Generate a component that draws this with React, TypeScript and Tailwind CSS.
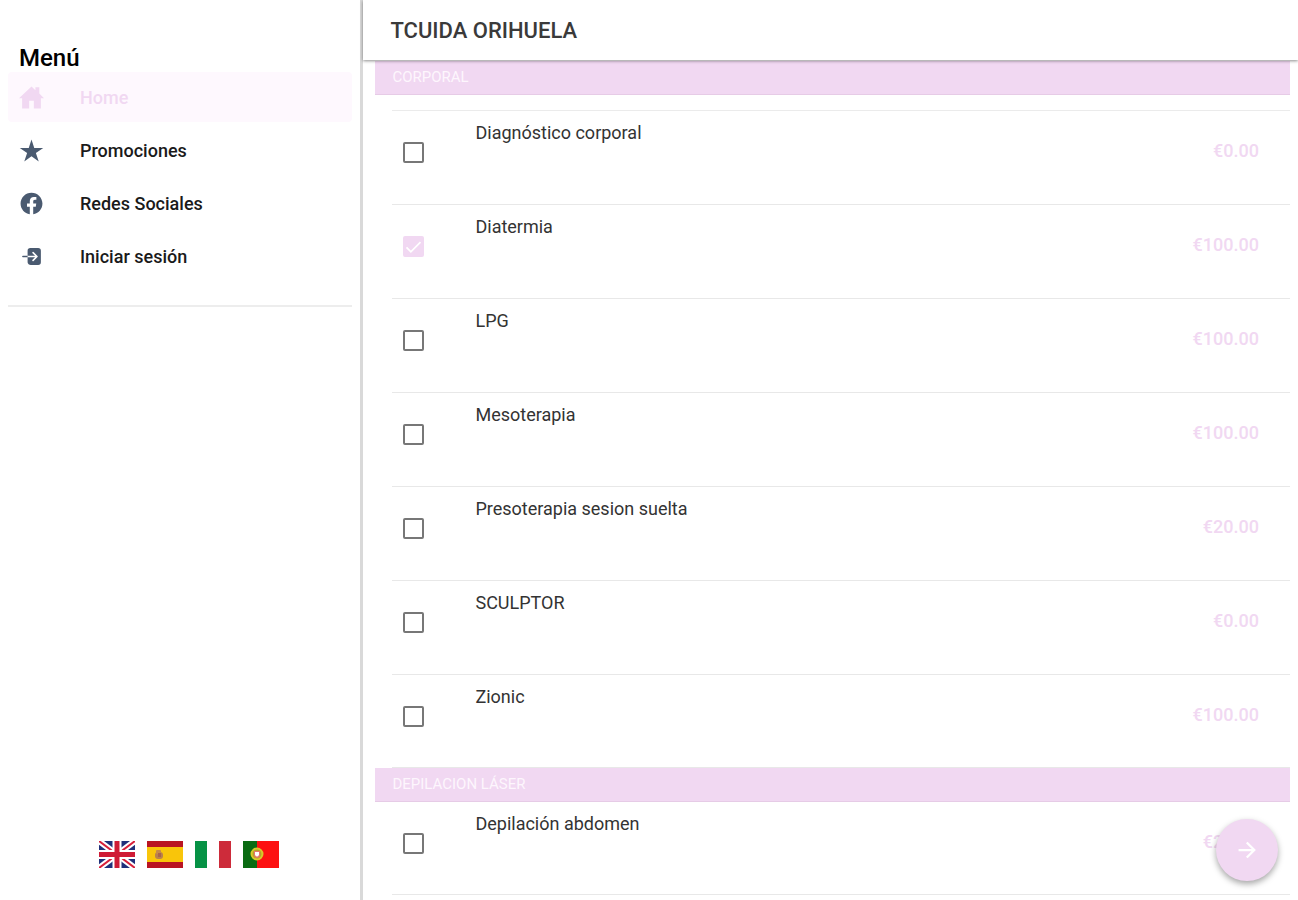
import { useState } from 'react';
import { IoHomeSharp, IoLogIn, IoLogoFacebook, IoStarSharp, IoArrowForwardSharp } from 'react-icons/io5';

const menuItems = [
  { label: 'Home', icon: IoHomeSharp },
  { label: 'Promociones', icon: IoStarSharp },
  { label: 'Redes Sociales', icon: IoLogoFacebook },
  { label: 'Iniciar sesión', icon: IoLogIn },
];

const corporal = [
  { name: 'Diagnóstico corporal', price: '€0.00' },
  { name: 'Diatermia', price: '€100.00' },
  { name: 'LPG', price: '€100.00' },
  { name: 'Mesoterapia', price: '€100.00' },
  { name: 'Presoterapia sesion suelta', price: '€20.00' },
  { name: 'SCULPTOR', price: '€0.00' },
  { name: 'Zionic', price: '€100.00' },
];

const laser = [{ name: 'Depilación abdomen', price: '€20.00' }];

function FlagUK() {
  return (
    <svg viewBox="0 0 36 27" className="h-[27px] w-9">
      <rect width="36" height="27" fill="#20307a" />
      <path d="M0 0L36 27M36 0L0 27" stroke="#fff" strokeWidth="6" />
      <path d="M0 0L36 27M36 0L0 27" stroke="#d8203a" strokeWidth="2" />
      <path d="M18 0V27M0 13.5H36" stroke="#fff" strokeWidth="9" />
      <path d="M18 0V27M0 13.5H36" stroke="#cf1b35" strokeWidth="5" />
    </svg>
  );
}

function FlagSpain() {
  return (
    <svg viewBox="0 0 36 27" className="h-[27px] w-9">
      <rect width="36" height="27" fill="#b91422" />
      <rect y="6" width="36" height="15" fill="#f9c50a" />
      <rect x="8" y="11" width="8" height="7" rx="3" fill="#b9814c" />
      <rect x="9" y="9" width="5" height="4" rx="1" fill="#c58a4a" />
      <rect x="11" y="12" width="3" height="4" fill="#a8644c" />
    </svg>
  );
}

function FlagItaly() {
  return (
    <svg viewBox="0 0 36 27" className="h-[27px] w-9">
      <rect width="36" height="27" fill="#fff" />
      <rect width="12" height="27" fill="#069245" />
      <rect x="24" width="12" height="27" fill="#cd2b3a" />
    </svg>
  );
}

function FlagPortugal() {
  return (
    <svg viewBox="0 0 36 27" className="h-[27px] w-9">
      <rect width="36" height="27" fill="#fd1111" />
      <rect width="14" height="27" fill="#0a6b12" />
      <circle cx="14" cy="13" r="5.5" fill="#b5a02a" stroke="#d8c92a" strokeWidth="2" />
      <path d="M11 10H17V14Q17 17 14 17Q11 17 11 14Z" fill="#e4776a" />
      <path d="M12 11H16V14Q14 17 12 14Z" fill="#fff" />
    </svg>
  );
}

const languages = [
  { name: 'English', flag: FlagUK },
  { name: 'Español', flag: FlagSpain },
  { name: 'Italiano', flag: FlagItaly },
  { name: 'Português', flag: FlagPortugal },
];

function SectionHeader({ title }: { title: string }) {
  return (
    <h2 className="flex h-[34px] items-center border-b border-[#e6cbe6] bg-[#f1d8f2] pl-[17px] text-[15px] text-[#fdf6fd]">
      {title}
    </h2>
  );
}

type RowProps = {
  name: string;
  price: string;
  checked: boolean;
  onToggle: () => void;
};

function ServiceRow({ name, price, checked, onToggle }: RowProps) {
  return (
    <li className="ml-[17px] h-[94px] border-b border-[#e8e8e8] last:h-[93px]">
      <label className="flex h-full cursor-pointer items-start pr-[31px]">
        <span className="mt-[31px] ml-[11px] grid h-[21px] w-[21px] shrink-0">
          <input
            type="checkbox"
            checked={checked}
            onChange={onToggle}
            className="col-start-1 row-start-1 h-[21px] w-[21px] appearance-none rounded-[2px] border-2 border-[#777777] bg-white checked:border-[#f1d8f2] checked:bg-[#f1d8f2]"
          />
          {checked && (
            <svg viewBox="0 0 24 24" fill="none" stroke="#fff" strokeWidth="2" className="pointer-events-none col-start-1 row-start-1 h-[21px] w-[21px]">
              <path d="M4 13L9 18L20 7" />
            </svg>
          )}
        </span>
        <span className="mt-[10px] ml-[51px] flex-1 text-lg leading-6 text-[#333333]">{name}</span>
        <span className="mt-[28px] text-lg leading-6 font-medium text-[#f1d8f2]">{price}</span>
      </label>
    </li>
  );
}

export default function App() {
  const [active, setActive] = useState('Home');
  const [selected, setSelected] = useState<string[]>(['Diatermia']);

  const toggle = (name: string) => {
    setSelected((prev) => (prev.includes(name) ? prev.filter((n) => n !== name) : [...prev, name]));
  };

  return (
    <div className="flex h-screen overflow-hidden bg-white font-['Roboto',sans-serif]">
      {/* Side menu */}
      <aside className="flex w-[28%] shrink-0 flex-col border-r-3 border-[#d9d9d9] px-2 pt-11">
        <h2 className="pl-[11px] text-2xl leading-7 font-medium text-black">Menú</h2>
        <nav className="flex flex-col gap-[3px] border-b-2 border-[#ededed] pb-6">
          {menuItems.map(({ label, icon: Icon }) => (
            <a
              key={label}
              href="#"
              onClick={() => setActive(label)}
              className={`flex h-[50px] items-center rounded-sm pl-[11px] text-lg font-medium ${active === label ? 'bg-[#fef8fe] text-[#f1d8f2]' : 'text-[#1a1a1a]'}`}
            >
              <Icon className={`mr-[36px] h-[25px] w-[25px] ${active === label ? 'text-[#f1d8f2]' : 'text-[#4a5a70]'}`} />
              <span className="pt-0.5">{label}</span>
            </a>
          ))}
        </nav>
        <div className="mt-auto flex justify-center gap-3 pb-8 pl-[17px]">
          {languages.map(({ name, flag: Flag }) => (
            <button key={name} type="button" aria-label={name}>
              <Flag />
            </button>
          ))}
        </div>
      </aside>

      {/* Services */}
      <div className="relative flex min-w-0 flex-1 flex-col">
        <header className="z-10 flex h-[60px] shrink-0 items-center bg-white pl-[27px] shadow-[0_1px_3px_rgba(0,0,0,0.45)]">
          <h1 className="text-[22px] font-medium text-[#3a3a3a]">TCUIDA ORIHUELA</h1>
        </header>
        <main className="flex-1 overflow-y-auto pt-px pr-2 pl-3 [scrollbar-width:none]">
          <section>
            <SectionHeader title="CORPORAL" />
            <div className="mt-[15px] ml-[17px] border-t border-[#ebebeb]"></div>
            <ul>
              {corporal.map((item) => (
                <ServiceRow key={item.name} {...item} checked={selected.includes(item.name)} onToggle={() => toggle(item.name)} />
              ))}
            </ul>
          </section>
          <section>
            <SectionHeader title="DEPILACION LÁSER" />
            <ul>
              {laser.map((item) => (
                <ServiceRow key={item.name} {...item} checked={selected.includes(item.name)} onToggle={() => toggle(item.name)} />
              ))}
            </ul>
          </section>
        </main>
        <button
          type="button"
          aria-label="Siguiente"
          className="absolute right-5 bottom-[19px] z-20 flex h-[62px] w-[62px] items-center justify-center rounded-full bg-[#f1d8f2] text-white shadow-[0_3px_6px_rgba(0,0,0,0.35)]"
        >
          <IoArrowForwardSharp className="h-6 w-6" />
        </button>
      </div>
    </div>
  );
}
